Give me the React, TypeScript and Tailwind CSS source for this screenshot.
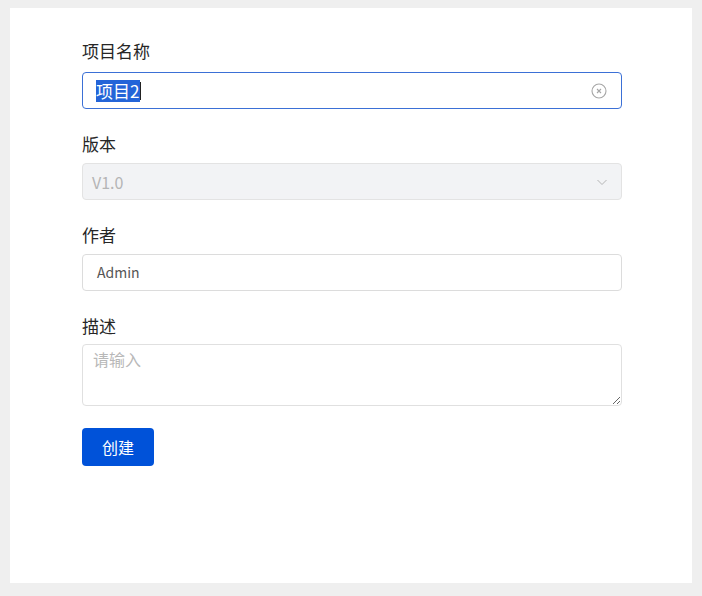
import React from "react";

const font = { fontFamily: '"Noto Sans CJK SC", "Noto Sans", sans-serif' };

export default function App() {
  return (
    <div className="w-[702px] h-[596px] bg-[#efefef] pt-[8px] px-[10px]" style={font}>
      <div className="bg-white h-[575px] pt-[31px] pl-[72px]">
        <div className="w-[540px] flex flex-col">
          <label className="text-[17px] leading-[24px] text-[#262626] mb-[9px]">项目名称</label>
          <div className="h-[37px] rounded-[4px] border border-[#3b70d6] flex items-center pl-[13px] pr-[13px]">
            <span className="flex-1 flex items-center">
              <span className="bg-[#2364d8] text-white text-[17px] leading-[22px] pr-[1px]">项目2</span>
              <span className="w-px h-[18px] bg-[#222]"></span>
            </span>
            <svg width="18" height="18" viewBox="0 0 18 18" fill="none">
              <circle cx="9" cy="9" r="7" stroke="#a6a6a6" strokeWidth="1.1" />
              <path d="M7 7 L11 11 M11 7 L7 11" stroke="#a6a6a6" strokeWidth="1.1" />
            </svg>
          </div>

          <label className="text-[17px] leading-[24px] text-[#262626] mt-[23px] mb-[7px]">版本</label>
          <div className="h-[37px] rounded-[4px] border border-[#e3e3e3] bg-[#f2f3f5] flex items-center pl-[9px] pr-[12px]">
            <span className="flex-1 text-[16px] text-[#b5b5b5]">V1.0</span>
            <svg width="14" height="14" viewBox="0 0 14 14" fill="none">
              <path d="M2.5 5 L7 9.5 L11.5 5" stroke="#b5b5b5" strokeWidth="1" />
            </svg>
          </div>

          <label className="text-[17px] leading-[24px] text-[#262626] mt-[23px] mb-[7px]">作者</label>
          <div className="h-[37px] rounded-[4px] border border-[#dcdcdc] bg-white flex items-center pl-[14px]">
            <span className="text-[14px] text-[#555555]">Admin</span>
          </div>

          <label className="text-[17px] leading-[24px] text-[#262626] mt-[23px] mb-[6px]">描述</label>
          <textarea
            className="h-[62px] rounded-[4px] border border-[#e0e0e0] bg-white px-[10px] pt-[2px] text-[16px] outline-none placeholder:text-[#b8b8b8]"
            placeholder="请输入"
            style={font}
          />

          <button className="mt-[22px] w-[72px] h-[38px] rounded-[4px] bg-[#0052d9] text-white text-[16px]" style={font}>
            创建
          </button>
        </div>
      </div>
    </div>
  );
}
